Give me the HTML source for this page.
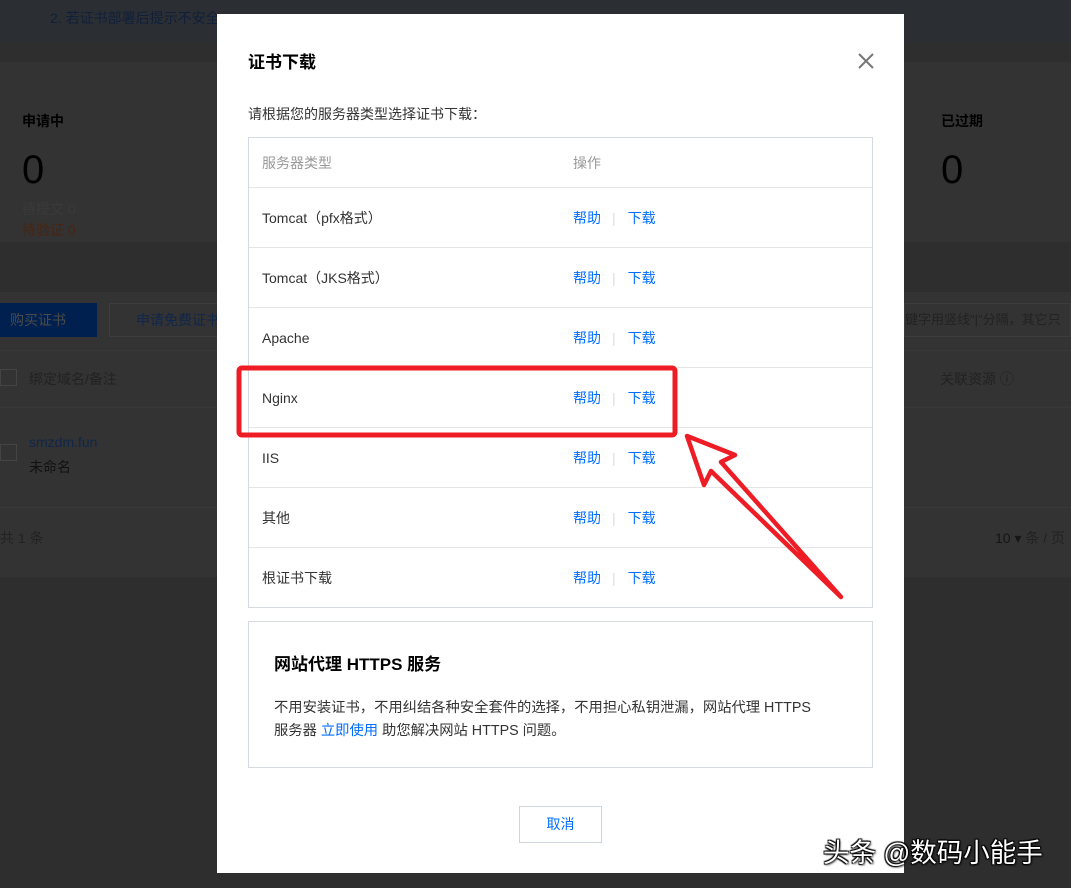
<!DOCTYPE html>
<html><head><meta charset="utf-8"><style>
*{margin:0;padding:0;box-sizing:border-box}
body{width:1071px;height:888px;overflow:hidden;background:#2e2e2e;font-family:"Liberation Sans","Noto Sans CJK SC",sans-serif;font-size:14px;position:relative;color:#000}
.a{position:absolute;white-space:nowrap}
.m{left:217px;top:14px;width:687px;height:859px;background:#fff}
.tb{left:248px;top:137px;width:625px;border:1px solid #d4d9e2}
.row{height:60px;border-top:1px solid #e5e5e5;display:flex;align-items:center;color:#333}
.row .c1{width:324px;padding-left:13px}
.row .c2{color:#006eff}
.row .sep{color:#ddd;margin:0 12px 0 11px}
</style></head><body>
<div class="a" style="left:0;top:0;width:1071px;height:42px;background:#2b2e33"></div>
<div class="a" style="left:50px;top:8px;color:#10203a;font-size:14px">2. 若证书部署后提示不安全</div>
<div class="a" style="left:0;top:62px;width:1071px;height:180px;background:#333"></div>
<div class="a" style="left:0;top:292px;width:1071px;height:285px;background:#333"></div>
<div class="a" style="left:22px;top:111px;font-weight:bold;font-size:14px">申请中</div>
<div class="a" style="left:22px;top:146px;font-size:40px;line-height:48px">0</div>
<div class="a" style="left:22px;top:199px;color:#3a3a3a">待提交 0</div>
<div class="a" style="left:22px;top:220px;color:#4a2410">待验证 0</div>
<div class="a" style="left:941px;top:111px;font-weight:bold">已过期</div>
<div class="a" style="left:941px;top:146px;font-size:40px;line-height:48px">0</div>
<div class="a" style="left:0;top:303px;width:97px;height:34px;background:#00214f;color:#4a4a4a;line-height:34px;padding-left:10px">购买证书</div>
<div class="a" style="left:109px;top:303px;width:110px;height:34px;border:1px solid #3d3d3d;color:#10264a;line-height:32px;padding-left:26px;overflow:hidden">申请免费证书</div>
<div class="a" style="left:904px;top:303px;width:167px;height:34px;border:1px solid #3d3d3d;color:#222;line-height:32px;font-size:13px;overflow:hidden">键字用竖线"|"分隔，其它只</div>
<div class="a" style="left:0;top:350px;width:1071px;height:1px;background:#383838"></div>
<div class="a" style="left:0;top:369px;width:17px;height:17px;border:1px solid #444"></div>
<div class="a" style="left:29px;top:369px;color:#222">绑定域名/备注</div>
<div class="a" style="left:940px;top:369px;color:#222">关联资源 ⓘ</div>
<div class="a" style="left:0;top:407px;width:1071px;height:1px;background:#383838"></div>
<div class="a" style="left:0;top:444px;width:17px;height:17px;border:1px solid #444"></div>
<div class="a" style="left:29px;top:434px;color:#10264a">smzdm.fun</div>
<div class="a" style="left:29px;top:457px;color:#111">未命名</div>
<div class="a" style="left:0;top:507px;width:1071px;height:1px;background:#383838"></div>
<div class="a" style="left:0;top:528px;color:#222">共 1 条</div>
<div class="a" style="left:995px;top:528px;color:#151515">10 ▾ <span style="color:#222">条 / 页</span></div>

<div class="a m"></div>
<div class="a" style="left:248px;top:48px;font-size:17px;font-weight:bold;color:#000">证书下载</div>
<svg class="a" style="left:857px;top:52px" width="18" height="18"><path d="M2 2L16 16M16 2L2 16" stroke="#777" stroke-width="2"/></svg>
<div class="a" style="left:248px;top:104px;color:#333">请根据您的服务器类型选择证书下载：</div>
<div class="a tb">
<div style="height:49px;display:flex;align-items:center;color:#999"><div style="width:324px;padding-left:13px">服务器类型</div><div>操作</div></div>
<div class="row"><div class="c1">Tomcat（pfx格式）</div><span class="c2">帮助</span><span class="sep">|</span><span class="c2">下载</span></div>
<div class="row"><div class="c1">Tomcat（JKS格式）</div><span class="c2">帮助</span><span class="sep">|</span><span class="c2">下载</span></div>
<div class="row"><div class="c1">Apache</div><span class="c2">帮助</span><span class="sep">|</span><span class="c2">下载</span></div>
<div class="row"><div class="c1">Nginx</div><span class="c2">帮助</span><span class="sep">|</span><span class="c2">下载</span></div>
<div class="row"><div class="c1">IIS</div><span class="c2">帮助</span><span class="sep">|</span><span class="c2">下载</span></div>
<div class="row"><div class="c1">其他</div><span class="c2">帮助</span><span class="sep">|</span><span class="c2">下载</span></div>
<div class="row"><div class="c1">根证书下载</div><span class="c2">帮助</span><span class="sep">|</span><span class="c2">下载</span></div>
</div>
<div class="a" style="left:248px;top:621px;width:625px;height:147px;border:1px solid #d4d9e2"></div>
<div class="a" style="left:274px;top:650px;font-size:17px;font-weight:bold">网站代理 HTTPS 服务</div>
<div class="a" style="left:274px;top:697px;color:#333;line-height:23px;font-size:14.3px">不用安装证书，不用纠结各种安全套件的选择，不用担心私钥泄漏，网站代理 HTTPS<br>服务器 <span style="color:#006eff">立即使用</span> 助您解决网站 HTTPS 问题。</div>
<div class="a" style="left:519px;top:806px;width:83px;height:37px;border:1px solid #cfd5de;color:#006eff;text-align:center;line-height:35px">取消</div>
<svg class="a" style="left:0;top:0" width="1071" height="888">
<rect x="239" y="368" width="436" height="67" rx="3" fill="none" stroke="#ee1c25" stroke-width="5"/>
<path d="M687 436L735 455L721 462L841 597L711 471L704 485Z" fill="none" stroke="#ee1c25" stroke-width="4.5" stroke-linejoin="round"/>
</svg>
<div class="a" style="left:823px;top:831px;font-size:26.5px;color:#fff;text-shadow:1px 1px 2px #000,-1px -1px 1px #000,1px -1px 1px #000,-1px 1px 1px #000">头条 @数码小能手</div>
</body></html>
